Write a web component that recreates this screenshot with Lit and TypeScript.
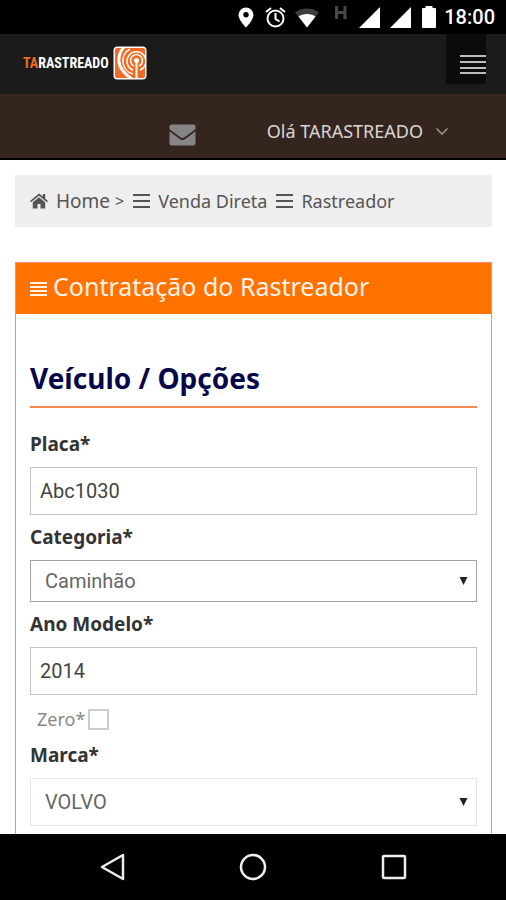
import { LitElement, html, css, svg } from "lit";
import { customElement, property } from "lit/decorators.js";

const bars = (rows: number[], width: number, height: number, thick: number) => html`
  <svg class="bars" width=${width} height=${height} viewBox="0 0 ${width} ${height}" aria-hidden="true">
    ${rows.map((y) => svg`<rect x="0" y=${y} width=${width} height=${thick} fill="currentColor" />`)}
  </svg>
`;

@customElement("status-bar")
class StatusBar extends LitElement {
  static styles = css`
    :host {
      display: flex;
      align-items: center;
      justify-content: flex-end;
      height: 34px;
      padding-right: 11px;
      background: #000;
      color: #fff;
      font-family: Roboto, sans-serif;
    }
    .time {
      margin-left: 8px;
      font-size: 20px;
      font-weight: 500;
      line-height: 36px;
    }
  `;
  render() {
    return html`
      <svg width="200" height="34" viewBox="236 0 200 34" fill="#fff" aria-hidden="true">
        <path fill-rule="evenodd" d="M246 7.500a7.500 7.500 0 0 0-7.500 7.500c0 5 7.500 12.500 7.500 12.500s7.500-7.500 7.500-12.500a7.500 7.500 0 0 0-7.500-7.500zm0 4.500a2.700 2.700 0 1 1 0 5.400a2.700 2.700 0 0 1 0-5.400z" />
        <g fill="none" stroke="#fff" stroke-width="2">
          <circle cx="275.500" cy="18.500" r="8" />
          <path d="M275.500 13v6l4 2.500M266 12l5-4M285 12l-5-4" />
        </g>
        <path d="M295 12.500c7-5.500 17-5.500 24 0L307 27.500z" fill="#3f3f3f" />
        <path d="M298.500 16.500c4-3.500 13-3.500 17 0L307 27.500z" />
        <path d="M336.500 6v13M345 6v13M336 12.500h9.500" fill="none" stroke="#484848" stroke-width="3" />
        <path d="M380 7v21h-21zM411 7v21h-21z" />
        <path d="M423 8h2.500V6h7v2h2.500q1 0 1 1v18q0 1-1 1h-12q-1 0-1-1V9q0-1 1-1z" />
      </svg>
      <span class="time">18:00</span>
    `;
  }
}

@customElement("site-header")
class SiteHeader extends LitElement {
  static styles = css`
    :host {
      display: block;
      font-family: "Noto Sans", "Open Sans", sans-serif;
    }
    .top {
      display: flex;
      justify-content: space-between;
      align-items: flex-start;
      height: 60px;
      padding: 0 20px 0 23px;
      box-sizing: border-box;
      background: #1b1b1b;
    }
    .logo {
      display: flex;
      align-items: center;
      gap: 4px;
      height: 58px;
      color: #fff;
      font: bold 14px "Liberation Sans Narrow", "Roboto Condensed", Roboto, sans-serif;
      text-decoration: none;
    }
    .accent {
      color: #f26a1b;
    }
    .toggle {
      display: flex;
      justify-content: flex-end;
      align-items: flex-end;
      width: 40px;
      height: 50px;
      padding: 0 0 9px;
      border: 0;
      background: #0c0c0c;
      color: #bdbdbd;
    }
    .user {
      display: flex;
      align-items: center;
      justify-content: flex-end;
      height: 66px;
      padding: 10px 57px 0 0;
      box-sizing: border-box;
      border-bottom: 2px solid #000;
      background: #35251f;
    }
    .mail {
      display: flex;
      margin-top: 8px;
      margin-right: 71px;
      color: #858585;
    }
    .account {
      display: flex;
      align-items: center;
      gap: 12px;
      padding: 0;
      border: 0;
      background: none;
      color: #d9d5d3;
      font: 18px/26px "Noto Sans", "Open Sans", sans-serif;
    }
  `;
  render() {
    return html`
      <div class="top">
        <a class="logo" href="#">
          <span><span class="accent">TA</span>RASTREADO</span>
          <svg width="34" height="34" viewBox="0 0 34 34" aria-hidden="true">
            <clipPath id="tile"><rect x="1" y="1" width="32" height="32" rx="3" /></clipPath>
            <rect x="0.500" y="0.500" width="33" height="33" rx="4" fill="#fff" />
            <rect x="2" y="2" width="30" height="30" rx="2" fill="#f26a24" />
            <g clip-path="url(#tile)" fill="none" stroke="#fff">
              <path d="M12 0Q5 7 6 16T20 34" stroke-width="3" />
              <path d="M20 28A13.500 13.500 0 0 1 17 3" stroke-width="1.500" />
              <path d="M20 24A9.500 9.500 0 1 1 27 24" stroke-width="1.500" />
              <path d="M21 20A6 6 0 1 1 26 20" stroke-width="1.500" />
              <path d="M23.500 15v17" stroke-width="2" />
            </g>
            <circle cx="23.500" cy="14.500" r="2.500" fill="#fff" />
          </svg>
        </a>
        <button class="toggle" aria-label="Menu">${bars([0, 6, 12, 17], 26, 20, 2)}</button>
      </div>
      <div class="user">
        <a class="mail" href="#" aria-label="Mensagens">
          <svg width="27" height="22" viewBox="0 0 27 22" aria-hidden="true">
            <rect x="0.500" y="0.500" width="26" height="21" rx="2" fill="currentColor" />
            <path d="M0 6l11 8q2.500 2 5 0L27 6" fill="none" stroke="#35251f" stroke-width="1.800" />
          </svg>
        </a>
        <button class="account">
          Olá TARASTREADO
          <svg width="14" height="9" viewBox="0 0 14 9" aria-hidden="true">
            <path d="M1.500 1.500L7 7l5.500-5.500" fill="none" stroke="#96928a" stroke-width="1.600" />
          </svg>
        </button>
      </div>
    `;
  }
}

@customElement("select-field")
class SelectField extends LitElement {
  @property() label = "";
  @property() value = "";
  @property() variant = "";
  static styles = css`
    :host {
      display: block;
    }
    .label {
      display: block;
      color: #333;
      font-size: 19px;
      font-weight: 700;
      line-height: 45px;
    }
    .box {
      display: grid;
      align-items: center;
    }
    .control,
    .arrow {
      grid-area: 1 / 1;
    }
    .control {
      width: 100%;
      height: 42px;
      padding: 0 14px;
      box-sizing: border-box;
      border: 1px solid #a2a2a2;
      border-radius: 0;
      appearance: none;
      background: #fff;
      color: #666;
      font: 20px Roboto, sans-serif;
    }
    .soft {
      height: 48px;
      border-color: #e6e6e6;
    }
    .arrow {
      justify-self: end;
      margin-right: 9px;
      pointer-events: none;
    }
  `;
  render() {
    return html`
      <label class="label" for="control">${this.label}</label>
      <div class="box">
        <select id="control" class="control ${this.variant}">
          <option>${this.value}</option>
        </select>
        <svg class="arrow" width="9" height="8" viewBox="0 0 9 8" aria-hidden="true">
          <path d="M0.500 0h8L4.500 8z" fill="#222" />
        </svg>
      </div>
    `;
  }
}

@customElement("nav-bar")
class NavBar extends LitElement {
  static styles = css`
    :host {
      display: flex;
      justify-content: center;
      gap: 101px;
      height: 66px;
      background: #000;
    }
    .key {
      display: flex;
      align-items: center;
      justify-content: center;
      width: 40px;
      padding: 0;
      border: 0;
      background: none;
    }
    .icon {
      fill: none;
      stroke: #eee;
      stroke-width: 2.500;
      stroke-linejoin: round;
    }
  `;
  render() {
    const key = (name: string, shape: unknown) => html`
      <button class="key" aria-label=${name}>
        <svg class="icon" width="28" height="28" viewBox="0 0 28 28">${shape}</svg>
      </button>
    `;
    return html`
      ${key("Voltar", svg`<path d="M4 14L25 2v24z" />`)}
      ${key("Início", svg`<circle cx="14" cy="14" r="12" />`)}
      ${key("Recentes", svg`<rect x="3" y="3" width="22" height="22" rx="1" />`)}
    `;
  }
}

@customElement("app-root")
class AppRoot extends LitElement {
  static styles = css`
    :host {
      display: flex;
      flex-direction: column;
      height: 100vh;
      background: #fff;
      color: #333;
      font-family: "Noto Sans", "Open Sans", sans-serif;
    }
    .content {
      flex: 1;
      min-height: 0;
      overflow: hidden;
      padding: 15px 14px 0 15px;
    }
    .crumbs {
      display: flex;
      align-items: center;
      gap: 9px;
      height: 52px;
      padding: 0 15px;
      background: #eee;
      font-size: 18px;
      line-height: 24px;
      color: #555;
    }
    .crumb {
      display: flex;
      align-items: center;
      gap: 8px;
      color: inherit;
      text-decoration: none;
    }
    .home {
      font-size: 19px;
    }
    .separator {
      margin-left: -4px;
      font-size: 16px;
    }
    .panel {
      margin-top: 35px;
      border: 1px solid #f88b80;
    }
    .title {
      display: flex;
      align-items: baseline;
      gap: 6px;
      height: 51px;
      padding-left: 14px;
      margin: 0;
      background: #ff7200;
      color: #fff3e8;
      font-size: 25px;
      font-weight: 400;
      line-height: 47px;
    }
    .form {
      padding: 45px 14px 30px;
    }
    .section {
      margin: 0 0 14px;
      padding-bottom: 9px;
      border-bottom: 2px solid #f5884f;
      color: #07074a;
      font-size: 28px;
      font-weight: 700;
      line-height: 38px;
    }
    .label {
      display: block;
      font-size: 19px;
      font-weight: 700;
      line-height: 45px;
    }
    .text {
      display: block;
      width: 100%;
      height: 48px;
      padding: 0 9px;
      box-sizing: border-box;
      border: 1px solid #c4c4c4;
      border-radius: 0;
      background: #fff;
      color: #444;
      font: 20px Roboto, sans-serif;
    }
    .check {
      display: flex;
      align-items: center;
      gap: 3px;
      height: 38px;
      padding: 10px 0 0 7px;
      box-sizing: border-box;
      color: #888;
      font-size: 18px;
    }
    .tick {
      width: 21px;
      height: 21px;
      margin: 0;
      border: 2px solid #ccc;
      appearance: none;
      background: #fff;
    }
  `;
  render() {
    return html`
      <status-bar></status-bar>
      <site-header></site-header>
      <main class="content">
        <nav class="crumbs">
          <a class="crumb home" href="#">
            <svg width="18" height="16" viewBox="0 0 18 16" fill="#555" aria-hidden="true">
              <path d="M9 0.500L0 8l1 1.300L9 2.800l8 6.500L18 8l-2.800-2.400V1h-2.400v2.600z" />
              <path d="M9 4.200L2.800 9.300V15.500H7.500V11h3v4.500h4.700V9.300z" />
            </svg>
            Home
          </a>
          <span class="separator">&gt;</span>
          <a class="crumb" href="#">${bars([0, 6, 12], 17, 14, 2)} Venda Direta</a>
          <a class="crumb" href="#">${bars([0, 6, 12], 17, 14, 2)} Rastreador</a>
        </nav>
        <section class="panel">
          <h1 class="title">${bars([0, 4, 8, 12], 17, 14, 2)} Contratação do Rastreador</h1>
          <form class="form">
            <h2 class="section">Veículo / Opções</h2>
            <label class="label" for="placa">Placa*</label>
            <input class="text" id="placa" type="text" value="Abc1030" />
            <select-field label="Categoria*" value="Caminhão"></select-field>
            <label class="label" for="ano">Ano Modelo*</label>
            <input class="text" id="ano" type="text" value="2014" />
            <div class="check">
              <label for="zero">Zero*</label>
              <input class="tick" id="zero" type="checkbox" />
            </div>
            <select-field label="Marca*" value="VOLVO" variant="soft"></select-field>
          </form>
        </section>
      </main>
      <nav-bar></nav-bar>
    `;
  }
}
